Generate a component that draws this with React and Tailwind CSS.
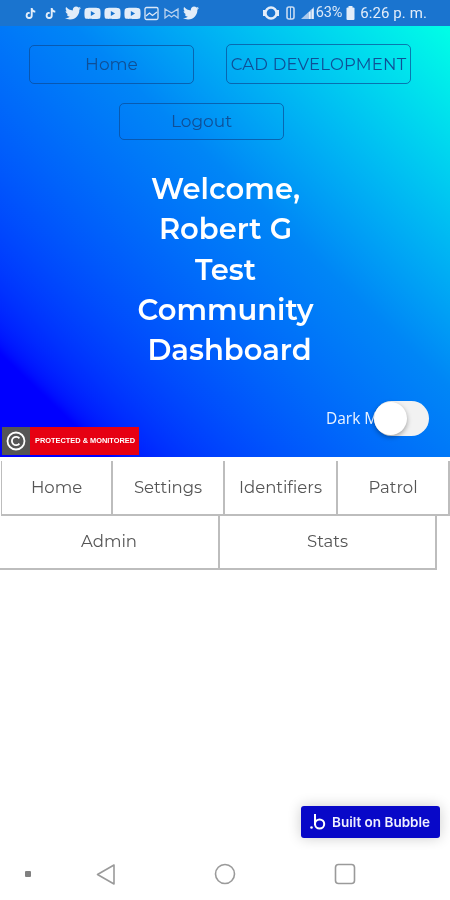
import React from "react";
import { FaTiktok, FaTwitter, FaYoutube } from "react-icons/fa";

function ImageIcon() {
  return (
    <svg width="15" height="15" viewBox="0 0 15 15" fill="none" stroke="#dbe8f8" strokeWidth="1.3">
      <rect x="1" y="1.5" width="13" height="12" rx="1.5" />
      <path d="M2 10l3.5-3 3 2.5L13 6" />
    </svg>
  );
}

function MailIcon() {
  return (
    <svg width="15" height="13" viewBox="0 0 15 13" fill="none" stroke="#b9d2ef" strokeWidth="1.3">
      <path d="M1 2l6.5 4L14 2v9l-4-3-2.5 2L5 8l-4 3z" />
    </svg>
  );
}

function StatusBar() {
  return (
    <div className="flex h-[26px] items-center justify-between bg-[#1a74cf] pl-[25px] pr-[23px]">
      <div className="flex items-center gap-[3px] text-[#e3edf9]">
        <FaTiktok className="mr-[6px] text-[11px]" />
        <FaTiktok className="mr-[6px] text-[11px]" />
        <FaTwitter className="text-[16px]" />
        <FaYoutube className="text-[17px]" />
        <FaYoutube className="text-[17px]" />
        <FaYoutube className="text-[17px]" />
        <ImageIcon />
        <span className="ml-[2px]">
          <MailIcon />
        </span>
        <FaTwitter className="ml-[1px] text-[16px]" />
      </div>
      <div className="flex items-center text-[#dce9f8]">
        <svg width="16" height="14" viewBox="0 0 16 14" className="mr-[7px]">
          <circle cx="8" cy="7" r="5.5" fill="none" stroke="#e3edf9" strokeWidth="2.4" />
          <rect x="0" y="4" width="2" height="6" fill="#e3edf9" />
          <rect x="14" y="4" width="2" height="6" fill="#e3edf9" />
        </svg>
        <svg width="9" height="14" viewBox="0 0 9 14" className="mr-[6px]">
          <rect x="1" y="1" width="7" height="12" rx="2" fill="none" stroke="#c6daf2" strokeWidth="1.6" />
          <path d="M4.5 1v12" stroke="#c6daf2" strokeWidth="1" />
        </svg>
        <svg width="13" height="12" viewBox="0 0 13 12" className="mr-[2px]">
          <path d="M0 12L13 0v12z" fill="#a9c8ec" />
          <path d="M8 12V5h1.5v7zM11 12V2h1.5v10z" fill="#e8f0fa" />
        </svg>
        <span className="mr-[4px] font-['Roboto',sans-serif] text-[14.5px] tracking-[-0.2px]">63%</span>
        <svg width="9" height="14" viewBox="0 0 9 14" className="mr-[5px]">
          <rect x="2.5" y="0" width="4" height="2" fill="#e3edf9" />
          <rect x="0.5" y="1.5" width="8" height="12.5" rx="1" fill="#e3edf9" />
        </svg>
        <span className="font-['Roboto',sans-serif] text-[15px] tracking-[0.1px] text-[#e3edf9]">6:26 p. m.</span>
      </div>
    </div>
  );
}

function OutlineButton({ label, className }) {
  return (
    <button
      className={`flex items-center justify-center rounded-[5px] border border-[#0b4a94]/70 font-['Montserrat','Inter',sans-serif] text-[#0f4f96] ${className}`}
    >
      {label}
    </button>
  );
}

function Hero() {
  return (
    <div className="relative h-[431px] bg-linear-to-tr from-[#0000ff] from-12% via-[#0086f6] via-58% to-[#00ffe6]">
      <div className="flex items-end pl-[29px] pt-[18px]">
        <OutlineButton label="Home" className="h-[39px] w-[165px] text-[17px]" />
        <OutlineButton
          label="CAD DEVELOPMENT"
          className="ml-[32px] h-[40px] w-[185px] text-[16.5px] tracking-[0.2px] whitespace-nowrap"
        />
      </div>
      <div className="pl-[119px] pt-[19px]">
        <OutlineButton label="Logout" className="h-[37px] w-[165px] text-[17px]" />
      </div>
      <div className="pl-[1px] pt-[29px] text-center font-['Montserrat','Inter',sans-serif] text-[29px] leading-[40.3px] font-semibold text-white">
        <div>Welcome,</div>
        <div>Robert G</div>
        <div>Test</div>
        <div>Community</div>
        <div className="pl-[8px]">Dashboard</div>
      </div>
      <span className="absolute left-[326px] top-[381px] font-['Open_Sans',sans-serif] text-[15.5px] text-[#eaf3ff]">
        Dark Mode
      </span>
      {/* toggle sits on top of the label, same as the screenshot */}
      <div className="absolute left-[374px] top-[375px] flex h-[35px] w-[55px] items-center rounded-full bg-[#f2f2f2]">
        <div className="h-[33px] w-[33px] rounded-full bg-white shadow-[0_2px_5px_rgba(0,0,0,0.35)]" />
      </div>
      <div className="absolute bottom-[2px] left-[2px] flex h-[28px] w-[137px] items-center bg-[#e60012]">
        <div className="flex h-full w-[28px] items-center justify-center bg-[#555555]">
          <svg width="20" height="20" viewBox="0 0 20 20" fill="none" stroke="white">
            <circle cx="10" cy="10" r="8.5" strokeWidth="1.8" />
            <path d="M13.4 7.4a4.2 4.2 0 1 0 0 5.2" strokeWidth="1.8" />
          </svg>
        </div>
        <span className="ml-[5px] whitespace-nowrap font-['Liberation_Sans',sans-serif] text-[7.4px] font-bold text-white">
          PROTECTED &amp; MONITORED
        </span>
      </div>
    </div>
  );
}

function Tab({ label, className }) {
  return (
    <div
      className={`flex items-center justify-center border-r-2 border-b-2 border-[#bdbdbd] font-['Montserrat','Inter',sans-serif] text-[16.5px] text-[#555555] ${className}`}
    >
      {label}
    </div>
  );
}

function Tabs() {
  return (
    <div className="pt-[4px]">
      <div className="flex h-[55px] pl-[2px]">
        <div className="-ml-[1px] w-[1px] bg-[#bdbdbd]" />
        <Tab label="Home" className="w-[111px]" />
        <Tab label="Settings" className="w-[112px]" />
        <Tab label="Identifiers" className="w-[113px]" />
        <Tab label="Patrol" className="w-[112px]" />
      </div>
      <div className="flex h-[54px]">
        <Tab label="Admin" className="w-[220px] pb-[2px]" />
        <Tab label="Stats" className="w-[217px] pb-[2px]" />
      </div>
    </div>
  );
}

function NavBar() {
  return (
    <div className="flex h-[50px] items-center justify-center bg-white">
      <svg width="450" height="50" viewBox="0 0 450 50" fill="none" stroke="#9a9a9a" strokeWidth="1.6">
        <rect x="25" y="21" width="6" height="6" rx="1" fill="#808080" stroke="none" />
        <path d="M97.5 24.5L114 15v19z" strokeLinejoin="round" />
        <circle cx="225" cy="24" r="9.5" />
        <rect x="335.5" y="14.5" width="19" height="19" rx="3" />
      </svg>
    </div>
  );
}

export default function App() {
  return (
    <div className="relative flex h-[900px] w-[450px] flex-col overflow-hidden bg-white blur-[0.5px]">
      <StatusBar />
      <Hero />
      <Tabs />
      <div className="flex flex-1 items-end justify-end pr-[10px] pb-[12px]">
        <div className="flex h-[32px] w-[139px] items-center rounded-[3px] bg-[#0808c8] pl-[9px] shadow-[0_0_14px_rgba(0,0,0,0.2)]">
          <svg width="16" height="18" viewBox="0 0 16 18" fill="none">
            <circle cx="1.5" cy="14.5" r="1.3" fill="white" />
            <path d="M5 1v11" stroke="white" strokeWidth="2" />
            <circle cx="9.6" cy="11" r="4.6" stroke="white" strokeWidth="2" />
          </svg>
          <span className="ml-[6px] whitespace-nowrap font-['Inter',sans-serif] text-[13.5px] font-semibold text-[#f0f0ff]">
            Built on Bubble
          </span>
        </div>
      </div>
      <NavBar />
    </div>
  );
}
